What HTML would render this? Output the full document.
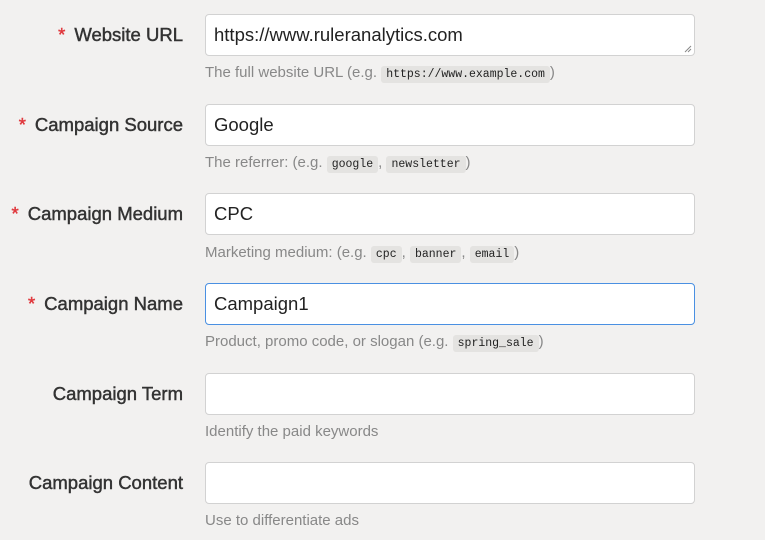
<!DOCTYPE html>
<html><head><meta charset="utf-8"><style>
body{margin:0;width:765px;height:540px;background:#f2f1f0;font-family:"Liberation Sans",sans-serif;position:relative;overflow:hidden}
.lab{position:absolute;right:582px;font-size:18.5px;color:#333;white-space:nowrap;line-height:42px;-webkit-text-stroke:0.45px #333}
.lab b{color:#e0393e;-webkit-text-stroke:0.45px #e0393e;font-weight:normal;margin-right:9px}
.in{position:absolute;left:205px;width:490px;height:42px;box-sizing:border-box;background:#fff;border:1px solid #d2d2d2;border-radius:4px;font-size:18.5px;color:#222;line-height:40px;padding-left:8px}
.in.f{border-color:#4a90e2}
.h{position:absolute;left:205px;font-size:15px;color:#888;white-space:nowrap;line-height:20px}
code{font-family:"Liberation Mono",monospace;font-size:11.5px;color:#222;background:#e4e3e1;border-radius:3px;padding:2px 5px}
</style></head><body>
<div class="lab" style="top:14px"><b>*</b>Website URL</div>
<div class="in" style="top:14px">https://www.ruleranalytics.com<svg style="position:absolute;right:2px;bottom:2px" width="8" height="8"><path d="M7 1L1 7M7 4L4 7" stroke="#888" stroke-width="1"/></svg></div>
<div class="h" style="top:63px">The full website URL (e.g. <code>https://www.example.com</code>)</div>

<div class="lab" style="top:104px"><b>*</b>Campaign Source</div>
<div class="in" style="top:104px">Google</div>
<div class="h" style="top:153px">The referrer: (e.g. <code>google</code>, <code>newsletter</code>)</div>

<div class="lab" style="top:193px"><b>*</b>Campaign Medium</div>
<div class="in" style="top:193px">CPC</div>
<div class="h" style="top:243px">Marketing medium: (e.g. <code>cpc</code>, <code>banner</code>, <code>email</code>)</div>

<div class="lab" style="top:283px"><b>*</b>Campaign Name</div>
<div class="in f" style="top:283px">Campaign1</div>
<div class="h" style="top:332px">Product, promo code, or slogan (e.g. <code>spring_sale</code>)</div>

<div class="lab" style="top:373px">Campaign Term</div>
<div class="in" style="top:373px"></div>
<div class="h" style="top:422px">Identify the paid keywords</div>

<div class="lab" style="top:462px">Campaign Content</div>
<div class="in" style="top:462px"></div>
<div class="h" style="top:511px">Use to differentiate ads</div>
</body></html>
